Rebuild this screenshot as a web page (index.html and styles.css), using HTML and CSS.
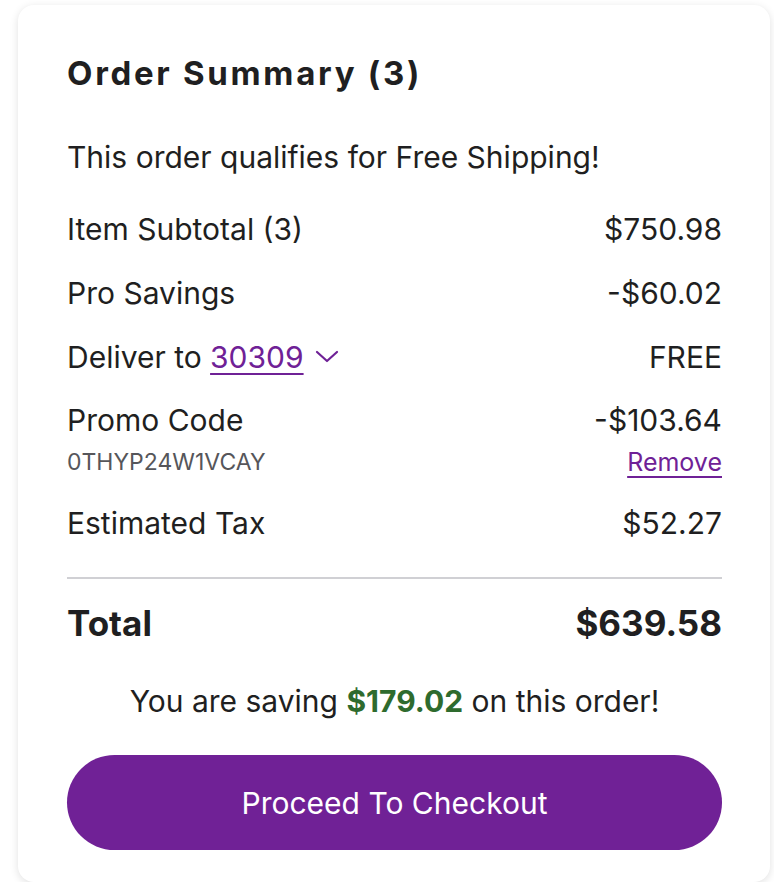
FILE: index.html
```html
<!DOCTYPE html>
<html>
<head>
<meta charset="utf-8">
<link rel="stylesheet" href="styles.css">
</head>
<body>
<div class="card">
  <h1 class="title">Order Summary (3)</h1>
  <p class="free">This order qualifies for Free Shipping!</p>
  <div class="row first"><span>Item Subtotal (3)</span><span>$750.98</span></div>
  <div class="row"><span>Pro Savings</span><span>-$60.02</span></div>
  <div class="row"><span class="deliver">Deliver to <a class="link" href="#">30309</a><svg class="chev" width="24" height="14" viewBox="0 0 24 14"><path d="M2 2 L12 11 L22 2" fill="none" stroke="#6f2196" stroke-width="2.2" stroke-linecap="round" stroke-linejoin="round"/></svg></span><span>FREE</span></div>
  <div class="row promo"><span>Promo Code</span><span>-$103.64</span></div>
  <div class="row sub"><span class="code">0THYP24W1VCAY</span><a class="link remove" href="#">Remove</a></div>
  <div class="row tax"><span>Estimated Tax</span><span>$52.27</span></div>
  <hr class="divider">
  <div class="row total"><span>Total</span><span>$639.58</span></div>
  <p class="saving">You are saving <strong class="green">$179.02</strong> on this order!</p>
  <button class="btn">Proceed To Checkout</button>
</div>
</body>
</html>
```
FILE: styles.css
```css
html, body { margin: 0; padding: 0; background: #ffffff; }
body { font-family: Inter, "Noto Sans", sans-serif; color: #1f1f21; }
.card {
  box-sizing: border-box;
  margin: 5px 0 0 18px;
  width: 752px;
  height: 877px;
  background: #fff;
  border-radius: 16px;
  box-shadow: 0 2px 8px rgba(0,0,0,0.12);
  padding: 48px 48px 0 49px;
  display: flex;
  flex-direction: column;
}
.title { margin: 0; font-size: 33px; font-weight: 700; line-height: 40px; letter-spacing: 2.7px; }
.free { margin: 46px 0 0; font-size: 30px; line-height: 36px; }
.row { display: flex; justify-content: space-between; align-items: center; font-size: 30px; line-height: 36px; margin-top: 28px; }
.row.first { margin-top: 36px; }
.row.promo { margin-top: 27px; }
.row.sub { margin-top: 10px; font-size: 23px; line-height: 28px; }
.row.tax { margin-top: 29px; }
.deliver { display: flex; align-items: center; }
.code { color: #56565a; }
.link { color: #6f2196; text-decoration: underline; text-underline-offset: 5px; text-decoration-thickness: 2px; margin-left: 0.28em; }
.remove { font-size: 25px; margin-left: 0; }
.chev { margin-left: 11px; }
.divider { border: 0; border-top: 2px solid #d0d0d4; margin: 36px 0 0; width: 100%; }
.row.total { font-size: 35px; font-weight: 700; line-height: 44px; margin-top: 22px; }
.saving { margin: 38px 0 0; text-align: center; font-size: 30px; line-height: 36px; }
.green { color: #2e6b2e; font-weight: 700; }
.btn {
  margin-top: 36px;
  height: 95px;
  border: 0;
  border-radius: 48px;
  background: #702196;
  color: #fff;
  font-family: inherit;
  font-size: 30px;
  width: 100%;
}
```
